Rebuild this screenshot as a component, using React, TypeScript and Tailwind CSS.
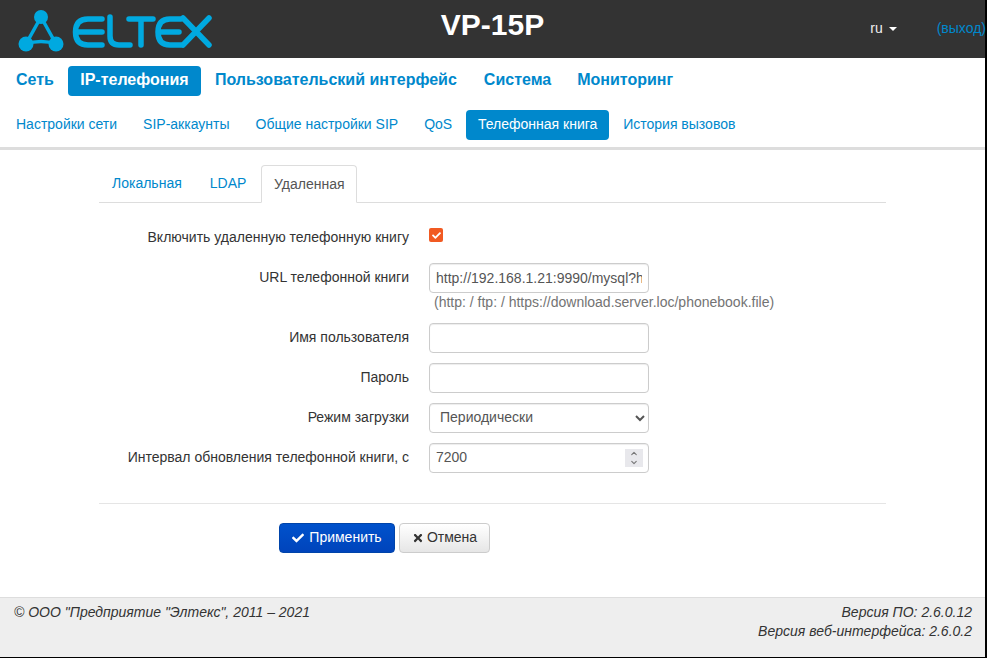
import { ChevronDown, ChevronUp } from "lucide-react";
import { FaCheck, FaTimes } from "react-icons/fa";

const topNav = [
  { label: "Сеть", extra: "" },
  { label: "IP-телефония", extra: "" },
  { label: "Пользовательский интерфейс", extra: "mr-[2px]" },
  { label: "Система", extra: "mr-[1px]" },
  { label: "Мониторинг", extra: "" },
];
const subNav = ["Настройки сети", "SIP-аккаунты", "Общие настройки SIP", "QoS", "Телефонная книга", "История вызовов"];

function Logo() {
  return (
    <svg width="205" height="45" viewBox="10 5 205 45" className="block text-[#00a9e0]">
      <path d="M41 15 L56 42 Q41 37 26 42 Z" fill="none" stroke="currentColor" strokeWidth="3.5" />
      <circle cx="41" cy="15" r="7" fill="currentColor" />
      <circle cx="26" cy="42" r="7.5" fill="currentColor" />
      <circle cx="56" cy="42" r="7.5" fill="currentColor" />
      <g fill="none" stroke="currentColor" strokeWidth="5.5" strokeLinecap="round" strokeLinejoin="round">
        <path d="M102 17 H88 Q75.5 17 75.5 30 Q75.5 43 88 43 H102 M77 30 H102" />
        <path d="M110 15 V34 Q110 43 119 43 H130" />
        <path d="M129 17 H153 M141 17 V43" />
        <path d="M181 17 H170 Q158 17 158 30 Q158 43 170 43 H181 M159 30 H179" />
        <path d="M183 16 L209 43 M209 16 L183 43" />
      </g>
    </svg>
  );
}

function FormRow({ label, children }: { label: string; children: React.ReactNode }) {
  return (
    <div className="flex items-start mb-2.5">
      <label className="w-[330px] pr-5 text-right text-[#333] leading-[20px] pt-[4px] shrink-0">{label}</label>
      {children}
    </div>
  );
}

const inputCls =
  "block w-[220px] h-[30px] px-[6px] rounded-[4px] border border-[#ccc] bg-white text-[14px] text-[#555] outline-none shadow-[inset_0_1px_1px_rgba(0,0,0,0.075)]";

export default function App() {
  return (
    <div className="w-[987px] h-[658px] overflow-hidden bg-black font-['Liberation_Sans',Arial,sans-serif] text-[14px]">
      <div className="w-[985px] h-[657px] bg-white flex flex-col">
        {/* Header */}
        <header className="relative h-[58px] bg-[#333] shrink-0 flex items-center">
          <div className="ml-[10px]">
            <Logo />
          </div>
          <div className="absolute left-0 w-[985px] top-[9px] text-center text-white font-bold text-[30px] leading-[32px]">
            VP-15P
          </div>
          <div className="ml-auto mr-[-1px] flex items-center text-[14px] pb-[1px]">
            <span className="text-[#eee]">ru</span>
            <span className="ml-[6px] mt-[1px] border-x-[4px] border-x-transparent border-t-[4px] border-t-white" />
            <span className="ml-[40px] text-[#0088cc]">(выход)</span>
          </div>
        </header>

        {/* Main nav */}
        <nav className="flex items-center h-[30px] mt-[8px] pl-[5px] gap-[3px]">
          {topNav.map((item) => (
            <a
              key={item.label}
              className={`h-[30px] leading-[28px] rounded-[4px] font-bold text-[16px] ${item.extra} ${
                item.label === "IP-телефония" ? "bg-[#0088cc] text-white w-[133px] text-center" : "px-[11px] text-[#0088cc]"
              }`}
            >
              {item.label}
            </a>
          ))}
        </nav>

        {/* Sub nav */}
        <nav className="flex items-center h-[30px] mt-[14px] pl-[6px] gap-[6px]">
          {subNav.map((item) => (
            <a
              key={item}
              className={`h-[30px] leading-[28px] rounded-[4px] ${
                item === "Телефонная книга"
                  ? "bg-[#0088cc] text-white ml-[-2px] mr-[-2px] w-[143px] text-center"
                  : "px-[10px] text-[#0088cc]"
              }`}
            >
              {item}
            </a>
          ))}
        </nav>

        <div className="h-[3px] bg-[#ddd] mt-[7px] shrink-0" />

        {/* Content */}
        <main className="flex-1 px-[99px]">
          <div className="flex h-[38px] mt-[15px] border-b border-[#ddd] pl-[2px] gap-[2px]">
            <a className="px-[11px] leading-[36px] text-[#0088cc]">Локальная</a>
            <a className="pl-[15px] pr-[13px] leading-[36px] text-[#0088cc]">LDAP</a>
            <a className="w-[96px] text-center h-[38px] leading-[36px] text-[#555] bg-white border border-[#ddd] border-b-white rounded-t-[4px]">
              Удаленная
            </a>
          </div>

          <form className="mt-[20px]">
            <div className="flex items-start mb-[14px]">
              <label className="w-[330px] pr-5 text-right text-[#333] leading-[28px] shrink-0 h-[26px]">
                Включить удаленную телефонную книгу
              </label>
              <span className="mt-[5px] w-[14px] h-[14px] rounded-[2px] bg-[#f15a22] flex items-center justify-center">
                <FaCheck size={9} className="text-white" />
              </span>
            </div>

            <div className="flex items-start">
              <label className="w-[330px] pr-5 text-right text-[#333] leading-[20px] pt-[4px] shrink-0">
                URL телефонной книги
              </label>
              <div>
                <input readOnly className={inputCls} value="http://192.168.1.21:9990/mysql?hash=1" />
                <div className="pl-[5px] mt-[1px] leading-[16px] text-[#737373]">
                  (http: / ftp: / https://download.server.loc/phonebook.file)
                </div>
              </div>
            </div>

            <div className="h-[13px]" />

            <FormRow label="Имя пользователя">
              <input readOnly className={inputCls} />
            </FormRow>
            <FormRow label="Пароль">
              <input readOnly className={inputCls} />
            </FormRow>
            <FormRow label="Режим загрузки">
              <select className={`${inputCls} pb-[2px]`} defaultValue="periodic">
                <option value="periodic">Периодически</option>
              </select>
            </FormRow>
            <FormRow label="Интервал обновления телефонной книги, с">
              <div className={`${inputCls} flex items-center justify-between pr-[5px]`}>
                <span className="mt-[-2px]">7200</span>
                <span className="flex flex-col items-center justify-center w-[18px] h-[18px] bg-[#e8e8ec] text-[#777]">
                  <ChevronUp size={10} strokeWidth={3} />
                  <ChevronDown size={10} strokeWidth={3} />
                </span>
              </div>
            </FormRow>
          </form>

          <div className="mt-[30px] border-t border-[#e5e5e5]" />

          <div className="flex mt-[19px] ml-[180px] gap-[4px]">
            <button className="h-[30px] w-[116px] pb-[2px] rounded-[4px] border border-[#0044aa] bg-gradient-to-b from-[#0052cc] to-[#0044bb] text-white flex items-center justify-center gap-[5px]">
              <FaCheck size={12} className="mt-[1px]" />
              Применить
            </button>
            <button className="h-[30px] w-[91px] pb-[2px] rounded-[4px] border border-[#ccc] bg-gradient-to-b from-white to-[#e6e6e6] text-[#333] flex items-center justify-center gap-[3px]">
              <FaTimes size={12} className="mt-[1px]" />
              Отмена
            </button>
          </div>
        </main>

        {/* Footer */}
        <footer className="h-[60px] shrink-0 bg-[#eee] border-t border-[#ddd] pl-[14px] pr-[13px] pt-[4px] flex justify-between italic text-[#333] leading-[20px]">
          <div>© ООО "Предприятие "Элтекс", 2011 – 2021</div>
          <div className="text-right">
            <div>Версия ПО: 2.6.0.12</div>
            <div className="mt-[-1px]">Версия веб-интерфейса: 2.6.0.2</div>
          </div>
        </footer>
      </div>
    </div>
  );
}
